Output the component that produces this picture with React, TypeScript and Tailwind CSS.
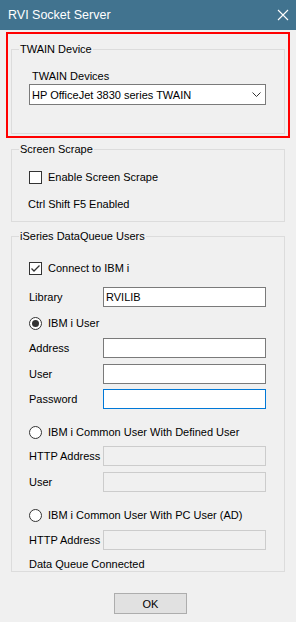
import React from 'react';

const FONT = { fontFamily: '"Liberation Sans", Arial, sans-serif' };

function Group({ title, children, className = '' }: { title: string; children: React.ReactNode; className?: string }) {
  return (
    <fieldset className={`border border-[#dcdcdc] w-[274px] ${className}`}>
      <legend className="ml-[7px] px-[1px] text-[11px] leading-[14px]">{title}</legend>
      {children}
    </fieldset>
  );
}

function CheckBox({ checked, label }: { checked?: boolean; label: string }) {
  return (
    <div className="h-[20px] flex items-center">
      <div className="w-[13px] h-[13px] border border-[#333333] bg-white flex items-center justify-center">
        {checked && (
          <svg width="11" height="11" viewBox="0 0 11 11">
            <path d="M1.5 5.5 L4 8 L9.5 2.5" stroke="#333333" strokeWidth="1.3" fill="none" />
          </svg>
        )}
      </div>
      <span className="ml-[6px]">{label}</span>
    </div>
  );
}

function Radio({ checked, label, className = '' }: { checked?: boolean; label: string; className?: string }) {
  return (
    <div className={`h-[20px] flex items-center ${className}`}>
      <div className="w-[13px] h-[13px] rounded-full border border-[#333333] bg-white flex items-center justify-center">
        {checked && <div className="w-[7px] h-[7px] rounded-full bg-[#333333]" />}
      </div>
      <span className="ml-[6px]">{label}</span>
    </div>
  );
}

function Field({
  label,
  value = '',
  disabled,
  focused,
  className = '',
}: {
  label: string;
  value?: string;
  disabled?: boolean;
  focused?: boolean;
  className?: string;
}) {
  const box = disabled
    ? 'border-[#cccccc] bg-[#f0f0f0]'
    : focused
      ? 'border-[#0078d7] bg-white'
      : 'border-[#7a7a7a] bg-white';
  return (
    <div className={`h-[20px] flex items-center ${className}`}>
      <span className="w-[74px]">{label}</span>
      <div className={`w-[163px] h-[20px] border ${box} flex items-center pl-[2px]`}>{value}</div>
    </div>
  );
}

export default function App() {
  return (
    <div className="w-[296px] h-[622px] bg-[#f0f0f0] text-black text-[11px] leading-[14px] overflow-hidden" style={FONT}>
      {/* Title bar */}
      <div className="h-[30px] bg-[#41738f] flex items-center justify-between pl-[8px] pr-[7px] text-white">
        <span className="text-[12.5px]">RVI Socket Server</span>
        <svg width="12" height="12" viewBox="0 0 12 12">
          <path d="M1 1 L11 11 M11 1 L1 11" stroke="#ffffff" strokeWidth="1.1" />
        </svg>
      </div>

      {/* TWAIN */}
      <div className="mt-[2px] mx-[6px] border-2 border-[#ff0000] px-[3px] pt-[8px] pb-[2px]">
        <Group title="TWAIN Device">
          <div className="px-[17px] pb-[28px]">
            <div className="mt-[13px] pl-[3px]">TWAIN Devices</div>
            <div className="mt-[1px] w-[237px] h-[21px] border border-[#7a7a7a] bg-white flex items-center justify-between pl-[2px] pr-[4px]">
              <span>HP OfficeJet 3830 series TWAIN</span>
              <svg width="9" height="5" viewBox="0 0 9 5">
                <path d="M0.5 0.5 L4.5 4.5 L8.5 0.5" stroke="#333333" strokeWidth="1" fill="none" />
              </svg>
            </div>
          </div>
        </Group>
      </div>

      {/* Screen Scrape */}
      <Group title="Screen Scrape" className="mx-[11px] mt-[4px]">
        <div className="px-[17px] pb-[10px]">
          <div className="mt-[11px]">
            <CheckBox label="Enable Screen Scrape" />
          </div>
          <div className="mt-[10px] -ml-[1px]">Ctrl Shift F5 Enabled</div>
        </div>
      </Group>

      {/* iSeries */}
      <Group title="iSeries DataQueue Users" className="mx-[11px] mt-[7px]">
        <div className="px-[17px]">
          <div className="mt-[15px]">
            <CheckBox checked label="Connect to IBM i" />
          </div>
          <Field label="Library" value="RVILIB" className="mt-[9px]" />
          <Radio checked label="IBM i User" className="mt-[6px]" />
          <Field label="Address" className="mt-[5px]" />
          <Field label="User" className="mt-[6px]" />
          <Field label="Password" focused className="mt-[5px]" />
          <Radio label="IBM i Common User With Defined User" className="mt-[13px]" />
          <Field label="HTTP Address" disabled className="mt-[4px]" />
          <Field label="User" disabled className="mt-[6px]" />
          <Radio label="IBM i Common User With PC User (AD)" className="mt-[13px]" />
          <Field label="HTTP Address" disabled className="mt-[5px]" />
          <div className="mt-[7px]">Data Queue Connected</div>
        </div>
      </Group>

      {/* OK */}
      <div className="mt-[21px] pl-[114px]">
        <button className="w-[73px] h-[21px] bg-[#e1e1e1] border border-[#adadad] text-[11px] leading-[14px]">OK</button>
      </div>
    </div>
  );
}
